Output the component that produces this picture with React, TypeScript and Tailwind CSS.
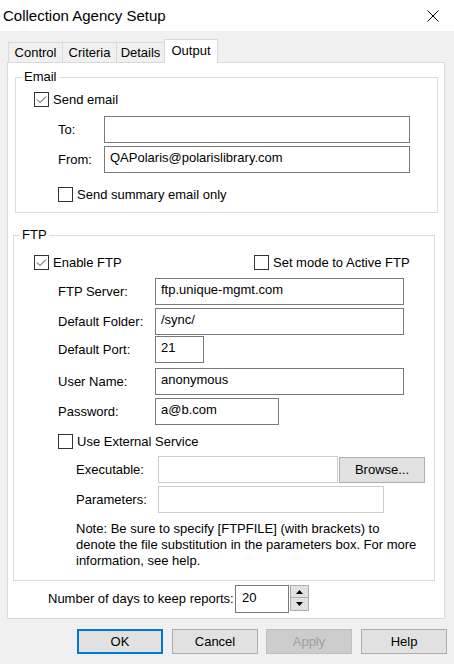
import React from "react";

function CheckBox({ checked, label, className = "" }: { checked?: boolean; label: string; className?: string }) {
  return (
    <div className={`flex items-center h-[15px] ${className}`}>
      <span className="w-[15px] h-[15px] border border-[#333333] bg-white flex items-center justify-center shrink-0">
        {checked && (
          <svg width="11" height="9" viewBox="0 0 11 9">
            <path d="M1 4.5 L4 7.5 L10 1.5" fill="none" stroke="#3c3c3c" strokeWidth="1" />
          </svg>
        )}
      </span>
      <span className="ml-[4px] leading-[16px] whitespace-nowrap">{label}</span>
    </div>
  );
}

function TextBox({ value = "", width, disabled = false }: { value?: string; width: string; disabled?: boolean }) {
  return (
    <div
      className={`${width} h-[27px] bg-white border pl-[5px] pt-[3px] leading-[16px] whitespace-nowrap ${
        disabled ? "border-[#cccccc]" : "border-[#7a7a7a]"
      }`}
    >
      {value}
    </div>
  );
}

function Field({ label, labelWidth, children, className = "" }: { label: string; labelWidth: string; children: React.ReactNode; className?: string }) {
  return (
    <div className={`flex items-center ${className}`}>
      <span className={`${labelWidth} leading-[16px] whitespace-nowrap`}>{label}</span>
      {children}
    </div>
  );
}

export default function App() {
  return (
    <div className="w-[454px] h-[664px] bg-[#f0f0f0] text-black text-[13px] font-['Liberation_Sans',Arial,sans-serif] overflow-hidden">
      {/* Title bar */}
      <div className="h-[31px] bg-white flex items-center justify-between pl-[3px] pr-[15px]">
        <span className="text-[15px] leading-[18px]">Collection Agency Setup</span>
        <svg width="12" height="12" viewBox="0 0 12 12">
          <path d="M0.5 0.5 L11.5 11.5 M11.5 0.5 L0.5 11.5" stroke="#000" strokeWidth="1" />
        </svg>
      </div>

      {/* Tabs */}
      <div className="mt-[8px] pl-[8px] flex items-end h-[23px]">
        <div className="w-[55px] h-[20px] border border-b-0 border-[#d9d9d9] flex items-center justify-center leading-[16px]">Control</div>
        <div className="-ml-px w-[55px] h-[20px] border border-b-0 border-[#d9d9d9] flex items-center justify-center leading-[16px]">Criteria</div>
        <div className="-ml-px w-[49px] h-[20px] border border-b-0 border-[#d9d9d9] flex items-center justify-center leading-[16px]">Details</div>
        <div className="-ml-px w-[54px] h-[24px] -mb-px relative z-10 bg-white border border-b-0 border-[#d9d9d9] flex items-center justify-center leading-[16px] pb-[2px]">Output</div>
      </div>

      {/* Tab panel */}
      <div className="ml-[7px] w-[438px] bg-white border border-[#d9d9d9] pb-[5px]">
        {/* Email */}
        <fieldset className="ml-[7px] mt-[6px] w-[423px] border border-[#dcdcdc] pb-[10px]">
          <legend className="ml-[6px] px-[2px] leading-[16px]">Email</legend>
          <CheckBox checked label="Send email" className="ml-[18px] mt-[7px]" />
          <Field label="To:" labelWidth="w-[46px]" className="pl-[42px] mt-[9px]">
            <TextBox width="w-[306px]" />
          </Field>
          <Field label="From:" labelWidth="w-[46px]" className="pl-[42px] mt-[3px]">
            <TextBox width="w-[306px]" value="QAPolaris@polarislibrary.com" />
          </Field>
          <CheckBox label="Send summary email only" className="ml-[42px] mt-[14px]" />
        </fieldset>

        {/* FTP */}
        <fieldset className="ml-[5px] mt-[14px] w-[422px] border border-[#dcdcdc] pb-[11px]">
          <legend className="ml-[6px] px-[2px] leading-[16px]">FTP</legend>
          <div className="flex mt-[12px] ml-[20px]">
            <div className="w-[220px]">
              <CheckBox checked label="Enable FTP" />
            </div>
            <CheckBox label="Set mode to Active FTP" />
          </div>
          <Field label="FTP Server:" labelWidth="w-[97px]" className="pl-[44px] mt-[8px]">
            <TextBox width="w-[249px]" value="ftp.unique-mgmt.com" />
          </Field>
          <Field label="Default Folder:" labelWidth="w-[97px]" className="pl-[44px] mt-[3px]">
            <TextBox width="w-[249px]" value="/sync/" />
          </Field>
          <Field label="Default Port:" labelWidth="w-[97px]" className="pl-[44px] mt-[1px]">
            <TextBox width="w-[49px]" value="21" />
          </Field>
          <Field label="User Name:" labelWidth="w-[97px]" className="pl-[44px] mt-[5px]">
            <TextBox width="w-[249px]" value="anonymous" />
          </Field>
          <Field label="Password:" labelWidth="w-[97px]" className="pl-[44px] mt-[3px]">
            <TextBox width="w-[124px]" value="a@b.com" />
          </Field>
          <CheckBox label="Use External Service" className="ml-[44px] mt-[9px]" />
          <Field label="Executable:" labelWidth="w-[82px]" className="pl-[62px] mt-[7px]">
            <TextBox width="w-[180px]" disabled />
            <button className="ml-[1px] w-[86px] h-[26px] bg-[#e1e1e1] border border-[#adadad] leading-[16px]">Browse...</button>
          </Field>
          <Field label="Parameters:" labelWidth="w-[82px]" className="pl-[62px] mt-[3px]">
            <TextBox width="w-[226px]" disabled />
          </Field>
          <div className="pl-[62px] mt-[8px] leading-[16px] whitespace-nowrap">
            <div>Note: Be sure to specify [FTPFILE] (with brackets) to</div>
            <div>denote the file substitution in the parameters box. For more</div>
            <div>information, see help.</div>
          </div>
        </fieldset>

        {/* Days to keep */}
        <div className="flex items-start mt-[4px] pl-[40px]">
          <span className="w-[187px] h-[28px] flex items-center leading-[16px] whitespace-nowrap">Number of days to keep reports:</span>
          <div className="w-[54px] h-[28px] bg-white border border-[#7a7a7a] pl-[6px] pt-[4px] leading-[16px]">20</div>
          <div className="ml-[1px] w-[19px] h-[26px] flex flex-col">
            <div className="h-[13px] bg-[#e1e1e1] border border-[#adadad] flex items-center justify-center">
              <svg width="7" height="4" viewBox="0 0 7 4"><path d="M3.5 0 L7 4 L0 4 Z" fill="#000" /></svg>
            </div>
            <div className="h-[13px] bg-[#e1e1e1] border border-t-0 border-[#adadad] flex items-center justify-center">
              <svg width="7" height="4" viewBox="0 0 7 4"><path d="M0 0 L7 0 L3.5 4 Z" fill="#000" /></svg>
            </div>
          </div>
        </div>
      </div>

      {/* Dialog buttons */}
      <div className="flex mt-[10px] pl-[77px]">
        <button className="w-[86px] h-[25px] bg-[#e1e1e1] border-2 border-[#0078d7] leading-[16px]">OK</button>
        <button className="ml-[9px] w-[86px] h-[25px] bg-[#e1e1e1] border border-[#adadad] leading-[16px]">Cancel</button>
        <button className="ml-[8px] w-[86px] h-[25px] bg-[#cccccc] border border-[#bfbfbf] text-[#a0a0a0] leading-[16px]">Apply</button>
        <button className="ml-[9px] w-[86px] h-[25px] bg-[#e1e1e1] border border-[#adadad] leading-[16px]">Help</button>
      </div>
    </div>
  );
}
